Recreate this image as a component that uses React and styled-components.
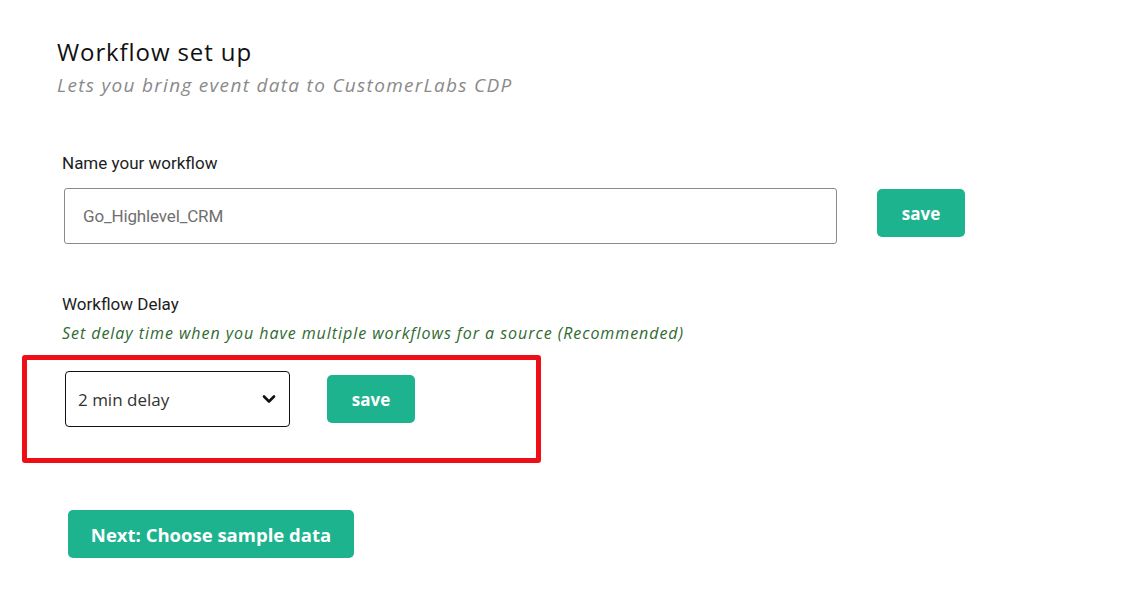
import React, { useState } from "react";
import styled, { createGlobalStyle } from "styled-components";

const GlobalStyle = createGlobalStyle`
  body {
    margin: 0;
    background: #ffffff;
    font-family: "Open Sans", "Liberation Sans", sans-serif;
  }
`;

const Page = styled.div`
  padding: 37px 0 0 57px;
  width: 1136px;
  height: 597px;
  box-sizing: border-box;
`;

const Title = styled.h1`
  margin: 0;
  font-family: "Open Sans", sans-serif;
  font-weight: 400;
  font-size: 24px;
  letter-spacing: 0.9px;
  line-height: 30px;
  color: #111;
`;

const Subtitle = styled.p`
  margin: 6px 0 0;
  font-family: "Open Sans", sans-serif;
  font-style: italic;
  font-size: 19px;
  letter-spacing: 1.3px;
  line-height: 24px;
  color: #8a8a8a;
`;

const Section = styled.div`
  display: flex;
  flex-direction: column;
  padding-left: 5px;
  margin-top: ${(p) => p.top}px;
`;

const Label = styled.label`
  font-family: Roboto, sans-serif;
  font-size: 17px;
  line-height: 20px;
  color: #1d1d1d;
`;

const Hint = styled.p`
  margin: 9px 0 0;
  font-family: "Open Sans", sans-serif;
  font-style: italic;
  font-size: 16px;
  letter-spacing: 0.95px;
  line-height: 20px;
  color: #2f6a2f;
  white-space: nowrap;
`;

const Row = styled.div`
  display: flex;
  align-items: center;
  gap: ${(p) => p.gap}px;
`;

const TextInput = styled.input`
  width: 773px;
  height: 56px;
  box-sizing: border-box;
  margin-left: 2px;
  border: 1px solid #8a8a8a;
  border-radius: 3px;
  padding: 0 18px;
  font-family: Roboto, sans-serif;
  font-size: 17px;
  letter-spacing: -0.15px;
  color: #6f6f6f;
  outline: none;
`;

const SaveButton = styled.button`
  width: 88px;
  height: 48px;
  border: none;
  border-radius: 5px;
  background: #1db38e;
  color: #fff;
  font-family: "Open Sans", sans-serif;
  font-weight: 700;
  font-size: 17px;
  cursor: pointer;
  margin-top: ${(p) => p.shift || 0}px;
`;

const Highlight = styled.div`
  width: 519px;
  box-sizing: border-box;
  margin: 12px 0 0 -40px;
  border: 5px solid #ee0e16;
  border-radius: 3px;
  padding: 11px 0 31px 38px;
`;

const SelectBox = styled.div`
  position: relative;
  width: 225px;
  height: 56px;
  box-sizing: border-box;
  border: 1px solid #111;
  border-radius: 4px;
  display: flex;
  align-items: center;
  justify-content: space-between;
  padding: 0 13px 0 12px;
  font-family: "Open Sans", sans-serif;
  font-size: 17px;
  color: #333;
  cursor: pointer;
`;

const NextButton = styled.button`
  margin: 47px 0 0 11px;
  width: 286px;
  height: 48px;
  border: none;
  border-radius: 5px;
  background: #1db38e;
  color: #fff;
  font-family: "Open Sans", sans-serif;
  font-weight: 700;
  font-size: 18.5px;
  cursor: pointer;
`;

const Chevron = () => (
  <svg width="14" height="10" viewBox="0 0 14 10">
    <path d="M2 2.5 L7 7.5 L12 2.5" fill="none" stroke="#111" strokeWidth="2.6" strokeLinecap="round" strokeLinejoin="round" />
  </svg>
);

const App = () => {
  const [name, setName] = useState("Go_Highlevel_CRM");

  return (
    <Page>
      <GlobalStyle />
      <Title>Workflow set up</Title>
      <Subtitle>Lets you bring event data to CustomerLabs CDP</Subtitle>

      <Section top={56}>
        <Label>Name your workflow</Label>
        <Row gap={40} style={{ marginTop: 15 }}>
          <TextInput value={name} onChange={(e) => setName(e.target.value)} />
          <SaveButton shift={-6}>save</SaveButton>
        </Row>
      </Section>

      <Section top={50}>
        <Label>Workflow Delay</Label>
        <Hint>Set delay time when you have multiple workflows for a source (Recommended)</Hint>
        <Highlight>
          <Row gap={37}>
            <SelectBox>
              <span>2 min delay</span>
              <Chevron />
            </SelectBox>
            <SaveButton>save</SaveButton>
          </Row>
        </Highlight>
      </Section>

      <NextButton>Next: Choose sample data</NextButton>
    </Page>
  );
};

export default App;
